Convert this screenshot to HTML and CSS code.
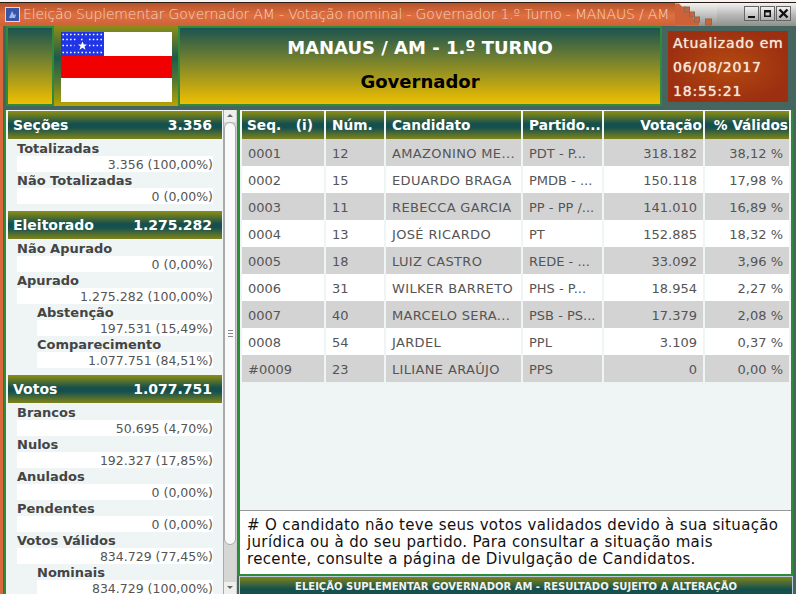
FILE: index.html
```html
<!DOCTYPE html>
<html lang="pt-BR">
<head>
<meta charset="utf-8">
<title>Eleição Suplementar Governador AM</title>
<link rel="stylesheet" href="styles.css">
</head>
<body>
<div class="window">
  <div class="titlebar">
    <div class="title-orange">
      <svg class="app-icon" width="15" height="15" viewBox="0 0 15 15"><rect width="15" height="15" fill="#d8dce6"/><rect x="1" y="1" width="13" height="13" fill="#3a55a8"/><path d="M4 11l3-7 2 4 2-1-1 4z" fill="#9fb8e8"/></svg>
      <span class="title-text">Eleição Suplementar Governador AM - Votação nominal - Governador 1.º Turno - MANAUS / AM</span>
    </div>
    <svg class="title-steps" width="42" height="22" viewBox="0 0 42 22">
      <path d="M0 0h4l3 3h4v4h4v4h3v4h6v7H0z" fill="#cf6138"/>
      <g fill="#c9643a" stroke="#8a6a55" stroke-width="1">
        <rect x="9.500" y="3.500" width="5" height="5"/><rect x="14.500" y="8.500" width="5" height="5"/><rect x="19.500" y="13.500" width="5" height="5"/><rect x="30.500" y="15.500" width="6" height="6"/>
      </g>
    </svg>
    <div class="title-fill">
      <span class="win-btn"><svg width="13" height="13" viewBox="0 0 13 13"><rect x="3" y="9" width="7" height="2" fill="#111"/></svg></span>
      <span class="win-btn"><svg width="13" height="13" viewBox="0 0 13 13"><path d="M3 3h7v7H3z M4.500 5.500v3h4v-3z" fill="#111" fill-rule="evenodd"/></svg></span>
      <span class="win-btn"><svg width="13" height="13" viewBox="0 0 13 13"><path d="M2.500 2.500l8 8M10.500 2.500l-8 8" stroke="#111" stroke-width="2.400"/></svg></span>
    </div>
  </div>
  <div class="content">
    <header class="top">
      <div class="panel-green top-side"></div>
      <div class="flag-box">
        <svg class="flag" width="111" height="70" viewBox="0 0 111 70">
          <rect width="111" height="70" fill="#fff"/>
          <rect y="24" width="111" height="22" fill="#f00000"/>
          <rect width="43" height="24" fill="#1f35e6"/>
          <g stroke="#fff" stroke-width="1.400" stroke-dasharray="1.500 2.300">
            <path d="M1.500 2.500h40"/><path d="M1.500 7.500h14M20 7.500h3M28 7.500h14"/><path d="M1.500 13.500h12M28 13.500h14"/><path d="M1.500 20.500h40"/>
          </g>
          <path d="M21.500 9.500l1.300 3h3.200l-2.500 2 1 3.200-3-1.900-3 1.900 1-3.200-2.500-2h3.200z" fill="#fff"/>
        </svg>
      </div>
      <div class="panel-green top-title">
        <div class="place">MANAUS / AM - 1.º TURNO</div>
        <div class="office">Governador</div>
      </div>
      <div class="updated">
        <div>Atualizado em</div>
        <div>06/08/2017</div>
        <div>18:55:21</div>
      </div>
    </header>
    <main class="main">
      <aside class="sidebar">
        <section class="block">
          <h2 class="block-head"><span>Seções</span><span>3.356</span></h2>
          <div class="stat"><div class="stat-label">Totalizadas</div><div class="stat-value">3.356 (100,00%)</div></div>
          <div class="stat"><div class="stat-label">Não Totalizadas</div><div class="stat-value">0 (0,00%)</div></div>
        </section>
        <section class="block">
          <h2 class="block-head"><span>Eleitorado</span><span>1.275.282</span></h2>
          <div class="stat"><div class="stat-label">Não Apurado</div><div class="stat-value">0 (0,00%)</div></div>
          <div class="stat"><div class="stat-label">Apurado</div><div class="stat-value">1.275.282 (100,00%)</div></div>
          <div class="stat sub"><div class="stat-label">Abstenção</div><div class="stat-value">197.531 (15,49%)</div></div>
          <div class="stat sub"><div class="stat-label">Comparecimento</div><div class="stat-value">1.077.751 (84,51%)</div></div>
        </section>
        <section class="block">
          <h2 class="block-head"><span>Votos</span><span>1.077.751</span></h2>
          <div class="stat"><div class="stat-label">Brancos</div><div class="stat-value">50.695 (4,70%)</div></div>
          <div class="stat"><div class="stat-label">Nulos</div><div class="stat-value">192.327 (17,85%)</div></div>
          <div class="stat"><div class="stat-label">Anulados</div><div class="stat-value">0 (0,00%)</div></div>
          <div class="stat"><div class="stat-label">Pendentes</div><div class="stat-value">0 (0,00%)</div></div>
          <div class="stat"><div class="stat-label">Votos Válidos</div><div class="stat-value">834.729 (77,45%)</div></div>
          <div class="stat sub"><div class="stat-label">Nominais</div><div class="stat-value">834.729 (100,00%)</div></div>
        </section>
      </aside>
      <div class="scrollbar">
        <span class="arrow arrow-up"></span>
        <div class="track">
          <div class="thumb"><span class="grip"></span></div>
        </div>
        <span class="arrow arrow-down"></span>
      </div>
      <div class="right">
        <div class="results">
          <div class="table-area">
            <table class="grid">
              <colgroup><col class="c1"><col class="c2"><col class="c3"><col class="c4"><col class="c5"><col class="c6"></colgroup>
              <thead>
                <tr><th><span class="seq-head"><span>Seq.</span><span>(i)</span></span></th><th>Núm.</th><th>Candidato</th><th>Partido...</th><th class="num">Votação</th><th class="num">% Válidos</th></tr>
              </thead>
              <tbody>
                <tr><td>0001</td><td>12</td><td class="name">AMAZONINO ME...</td><td>PDT - P...</td><td class="num">318.182</td><td class="num">38,12 %</td></tr>
                <tr><td>0002</td><td>15</td><td class="name">EDUARDO BRAGA</td><td>PMDB - ...</td><td class="num">150.118</td><td class="num">17,98 %</td></tr>
                <tr><td>0003</td><td>11</td><td class="name">REBECCA GARCIA</td><td>PP - PP /...</td><td class="num">141.010</td><td class="num">16,89 %</td></tr>
                <tr><td>0004</td><td>13</td><td class="name">JOSÉ RICARDO</td><td>PT</td><td class="num">152.885</td><td class="num">18,32 %</td></tr>
                <tr><td>0005</td><td>18</td><td class="name">LUIZ CASTRO</td><td>REDE - ...</td><td class="num">33.092</td><td class="num">3,96 %</td></tr>
                <tr><td>0006</td><td>31</td><td class="name">WILKER BARRETO</td><td>PHS - P...</td><td class="num">18.954</td><td class="num">2,27 %</td></tr>
                <tr><td>0007</td><td>40</td><td class="name">MARCELO SERA...</td><td>PSB - PS...</td><td class="num">17.379</td><td class="num">2,08 %</td></tr>
                <tr><td>0008</td><td>54</td><td class="name">JARDEL</td><td>PPL</td><td class="num">3.109</td><td class="num">0,37 %</td></tr>
                <tr><td>#0009</td><td>23</td><td class="name">LILIANE ARAÚJO</td><td>PPS</td><td class="num">0</td><td class="num">0,00 %</td></tr>
              </tbody>
            </table>
          </div>
          <p class="note"># O candidato não teve seus votos validados devido à sua situação<br>jurídica ou à do seu partido. Para consultar a situação mais<br>recente, consulte a página de Divulgação de Candidatos.</p>
        </div>
        <footer class="footer-bar">ELEIÇÃO SUPLEMENTAR GOVERNADOR AM - RESULTADO SUJEITO A ALTERAÇÃO</footer>
      </div>
    </main>
  </div>
</div>
</body>
</html>
```
FILE: styles.css
```css
* { box-sizing: border-box; }
html, body { margin: 0; padding: 0; height: 594px; overflow: hidden; }
body { font-family: "DejaVu Sans", sans-serif; font-size: 13px; color: #555; background: #000; }
.window { width: 796px; height: 594px; display: flex; flex-direction: column; overflow: hidden; background: #f4f4f4; }

/* title bar */
.titlebar { height: 26px; flex: none; display: flex; padding-top: 2px; background: #f4f4f4; }
.title-orange { width: 675px; flex: none; display: flex; align-items: center; gap: 3px; padding: 0 0 1px 5px; border-top: 1px solid #2b1a12; background: linear-gradient(#b4532c, #df6f40 55%, #cf6138); }
.app-icon { flex: none; }
.title-text { font-size: 14px; font-weight: 200; color: #f6d3bf; white-space: nowrap; letter-spacing: -0.18px; }
.title-steps { flex: none; width: 42px; height: 24px; border-top: 1px solid #2b1a12; background: linear-gradient(#f2f2f2, #c4c5c3 50%, #8f918d); }
.title-fill { flex: 1; display: flex; justify-content: flex-end; align-items: center; gap: 1px; padding: 0 5px 2px 0; border-top: 1px solid #2b1a12; background: linear-gradient(#f2f2f2, #b9bab8 50%, #8f918d); }
.win-btn { width: 15px; height: 15px; display: flex; align-items: center; justify-content: center; background: linear-gradient(#f0f0f0, #b0b0b0); border: 1px solid #666; }

/* content area */
.content { flex: 1; min-height: 0; display: flex; flex-direction: column; padding: 0 3px 0 4px; background: #46655f; position: relative; }
.content::before { content: ""; position: absolute; left: 0; top: 0; bottom: 0; width: 3px; background: #d9693c; }

/* header */
.top { flex: none; height: 80px; display: flex; padding-left: 2px; }
.panel-green { border: 2px solid #2f8a3a; background: linear-gradient(#1b5450, #f0bf00); }
.top-side { width: 48px; }
.flag-box { width: 124px; display: flex; align-items: center; justify-content: center; padding: 2px 0 0 1px; background: linear-gradient(#8d8d18, #1d5a4c 40%, #5a7a30 70%, #b8a400); }
.flag { display: block; }
.top-title { width: 484px; display: flex; flex-direction: column; align-items: center; padding-top: 8px; gap: 10px; font-weight: 700; }
.place { font-size: 18px; color: #fff; line-height: 24px; }
.office { font-size: 18px; color: #000; line-height: 24px; }
.updated { width: 120px; height: 71px; margin: 5px 0 0 6px; padding: 0 5px; background: radial-gradient(ellipse at center, #b34a10, #9c2f10 75%); color: #f6e7d8; font-size: 14px; line-height: 24px; white-space: nowrap; letter-spacing: 0.8px; text-shadow: 0 0 1px #f6e7d8; display: flex; flex-direction: column; }

/* main */
.main { flex: 1; min-height: 0; display: flex; padding-top: 4px; }
.sidebar { width: 219px; flex: none; overflow: hidden; border-left: 2px solid #2f8a3a; background: #eff5f5; padding: 1px 1px 0 2px; }
.block { margin-bottom: 7px; }
.block-head { margin: 0 0 1px; height: 28px; display: flex; justify-content: space-between; align-items: center; padding: 0 10px 0 5px; font-size: 14px; font-weight: 700; color: #fff; background: linear-gradient(#8f8f10, #16504e 45%, #16504e 60%, #808418); }
.stat { padding: 0 9px; height: 32px; }
.stat-label { height: 16px; line-height: 18px; font-weight: 700; color: #444; }
.stat-value { height: 16px; line-height: 18px; background: #fff; text-align: right; color: #555; font-size: 12.500px; }
.sub { padding-left: 29px; }

/* scrollbar */
.scrollbar { width: 14px; flex: none; display: flex; flex-direction: column; background: #d6d6d4; border-left: 1px solid #aaa; border-right: 1px solid #ccc; }
.arrow { height: 12px; flex: none; background: #efefee; position: relative; }
.arrow-up::after, .arrow-down::after { content: ""; position: absolute; left: 3px; top: 4px; border: 3px solid transparent; }
.arrow-up::after { border-bottom-color: #666; border-top-width: 0; }
.arrow-down::after { border-top-color: #666; border-bottom-width: 0; }
.track { flex: 1; display: flex; flex-direction: column; padding-bottom: 37px; background: #d6d6d4; border-radius: 0 0 7px 7px; }
.thumb { flex: 1; background: #fafafa; border: 1px solid #aaa; border-radius: 7px; display: flex; align-items: center; justify-content: center; }
.grip { width: 5px; height: 7px; background: repeating-linear-gradient(#888 0 1px, transparent 1px 3px); }

/* results */
.right { flex: 1; min-width: 0; display: flex; flex-direction: column; }
.results { flex: 1; min-height: 0; display: flex; flex-direction: column; border: solid #2f8a3a; border-width: 0 2px 2px 3px; background: #eff5f5; }
.table-area { height: 401px; flex: none; padding-top: 1px; background: #eff5f5; border-bottom: 1px solid #999; }
.grid { border-collapse: separate; border-spacing: 2px 0; table-layout: fixed; width: 551px; }
.c1 { width: 82px; } .c2 { width: 58px; } .c3 { width: 135px; } .c4 { width: 79px; } .c5 { width: 99px; } .c6 { width: 84px; }
.grid th { height: 28px; padding: 0 1px 0 6px; text-align: left; font-size: 13.700px; font-weight: 700; color: #fff; white-space: nowrap; overflow: hidden; background: linear-gradient(#8f8f10, #16504e 45%, #16504e 60%, #808418); }
.grid th:first-child { padding-left: 5px; }
.seq-head { display: flex; justify-content: space-between; padding-right: 10px; }
.grid td { height: 27px; padding: 2px 6px 0 6px; color: #555; white-space: nowrap; overflow: hidden; background: #d3d3d3; }
.grid .name { letter-spacing: 0.35px; }
.grid tr:nth-child(even) td { background: #fff; }
.grid .num { text-align: right; }
.note { flex: 1; margin: 0; padding: 6px 0 0 7px; background: #fff; color: #111; font-size: 15px; line-height: 17px; letter-spacing: 0.35px; white-space: nowrap; }

.footer-bar { flex: none; height: 18px; margin-left: 2px; padding-top: 3px; text-align: center; font-size: 10px; line-height: 14px; font-weight: 700; color: #f2f2f2; border: 1px solid #bcd; border-bottom: 0; background: linear-gradient(#7e8418, #16504e 70%); white-space: nowrap; }
```
